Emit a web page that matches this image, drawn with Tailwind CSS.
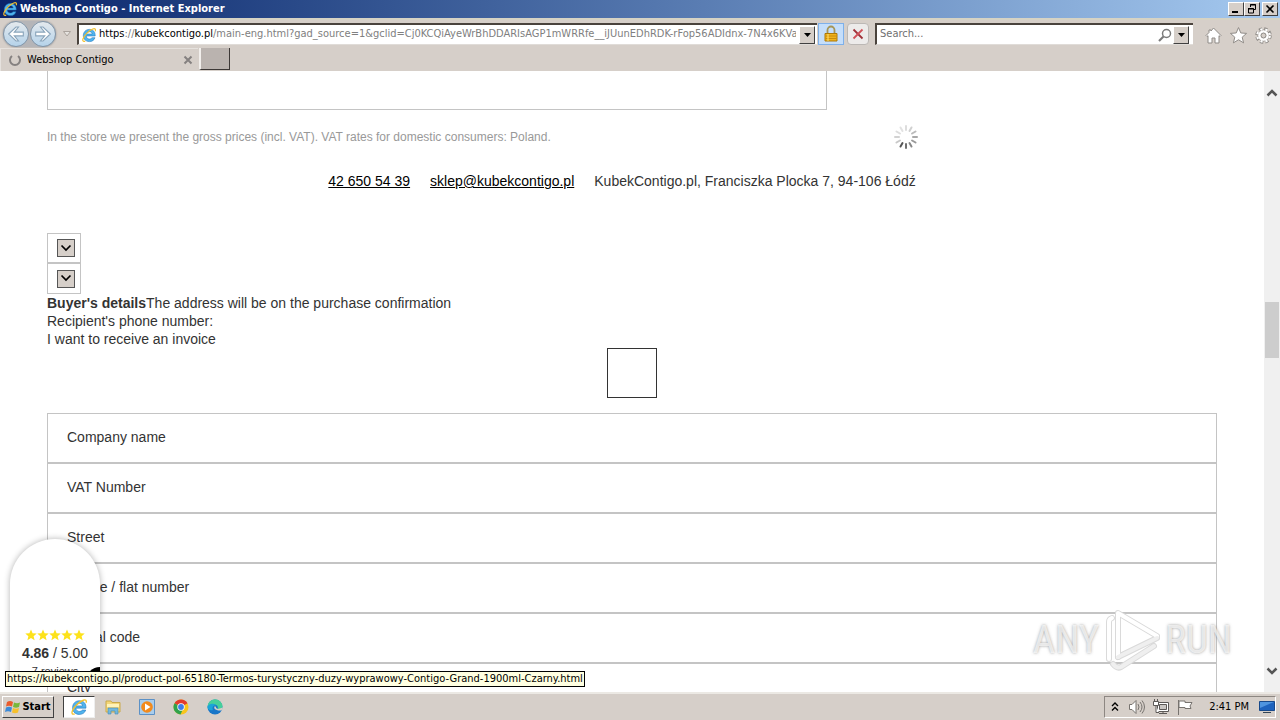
<!DOCTYPE html>
<html lang="en">
<head>
<meta charset="utf-8">
<title>Webshop Contigo</title>
<script src="https://cdn.jsdelivr.net/npm/@tailwindcss/browser@4"></script>
</head>
<body class="h-screen overflow-hidden flex flex-col bg-[#d6cfc9] text-[11px] text-black font-['DejaVu_Sans_Condensed','DejaVu_Sans',sans-serif]">
<svg class="hidden">
  <symbol id="ie" viewBox="0 0 16 16">
    <path d="M14.200 9H5.200c.2 1.900 1.500 3 3.200 3 1.200 0 2.100-.5 2.600-1.300h3c-.8 2.500-2.900 3.900-5.600 3.900-3.600 0-6.100-2.400-6.100-6S4.800 2.400 8.400 2.400c3.800 0 6 2.500 5.800 6.600zM5.300 7h5.900C11 5.500 10 4.700 8.300 4.700S5.600 5.500 5.300 7z" fill="#4fb4ee" stroke="#1b6fb5" stroke-width=".5"/>
    <path d="M14.300 4.200c.7-2.100-.3-3-2.500-2.200C8 3.400 3.300 8.200 2 11.800c-.7 2 0 3 2.200 2.300" fill="none" stroke="#f2c12e" stroke-width="1.200"/>
  </symbol>
  <symbol id="star" viewBox="0 0 12 12"><path d="M6 .4l1.600 3.800 4.100.3-3.100 2.700 1 4L6 9 2.400 11.200l1-4L.3 4.500l4.100-.3z"/></symbol>
</svg>

<header class="shrink-0">
  <div class="h-[18px] flex items-center bg-linear-to-r from-[#0a246a] to-[#a6caf0] pl-0.5 pr-0.5 text-white font-bold">
    <svg class="size-4 mr-0.5"><use href="#ie"/></svg>
    <h1 class="flex-1 whitespace-nowrap">Webshop Contigo - Internet Explorer</h1>
    <button aria-label="Minimize" class="w-4 h-[14px] bg-[#d6cfc9] border border-t-white border-l-white border-r-[#404040] border-b-[#404040]"><svg viewBox="0 0 14 12"><path d="M3 8h6v2H3z"/></svg></button>
    <button aria-label="Restore" class="w-4 h-[14px] bg-[#d6cfc9] border border-t-white border-l-white border-r-[#404040] border-b-[#404040]"><svg viewBox="0 0 14 12" fill="none" stroke="#000"><path d="M5.500 4V1.500h5v5H9M5 2h6M3 5.500h5.500v4.500H3.500V5M3 6h6"/></svg></button>
    <button aria-label="Close" class="w-4 h-[14px] ml-0.5 bg-[#d6cfc9] border border-t-white border-l-white border-r-[#404040] border-b-[#404040]"><svg viewBox="0 0 14 12" stroke="#000" stroke-width="1.600"><path d="M3.500 2.500l7 7M10.500 2.500l-7 7"/></svg></button>
  </div>
  <div class="h-[30px] flex items-center border-t-2 border-[#d6d3c4] pl-[3px] pr-2">
    <div class="flex items-center rounded-full bg-[#b5b5b8] shadow-[0_0_2px_#888]">
      <button aria-label="Back" class="size-[26px] rounded-full border border-[#8195a8] bg-linear-to-b from-[#e4e9ed] to-[#b5d3ea] p-[3px]"><svg viewBox="0 0 16 16" fill="#fff" stroke="#8aa5bb" stroke-width="1"><path d="M1.500 8L8 1.800h2.200L6.500 6.300h8v3.400h-8l3.700 4.500H8z"/></svg></button>
      <button aria-label="Forward" class="size-[26px] ml-px rounded-full border border-[#8195a8] bg-linear-to-b from-[#e4e9ed] to-[#b5d3ea] p-[3px]"><svg viewBox="0 0 16 16" fill="#fff" stroke="#8aa5bb" stroke-width="1"><path d="M14.500 8L8 1.800H5.800l3.700 4.500h-8v3.400h8l-3.700 4.500H8z"/></svg></button>
    </div>
    <button aria-label="Recent pages" class="w-[21px] flex justify-center"><svg class="w-2 h-1.5" viewBox="0 0 8 6"><path d="M.5.500h7L4 5z" fill="#e6e3df" stroke="#aaa39d"/></svg></button>
    <div class="flex-1 min-w-0 h-[22px] flex items-center bg-white border-t-2 border-l-2 border-t-[#4a433d] border-l-[#4a433d] border-b border-b-[#e0dcd8]">
      <svg class="size-4 mx-0.5 shrink-0"><use href="#ie"/></svg>
      <div class="flex-1 overflow-hidden whitespace-nowrap text-[#808080]"><span class="text-black">https</span>://<span class="text-black">kubekcontigo.pl</span>/main-eng.html?gad_source=1&amp;gclid=Cj0KCQiAyeWrBhDDARIsAGP1mWRRfe__iJUunEDhRDK-rFop56ADIdnx-7N4x6KVavc</div>
      <button aria-label="Show address history" class="w-4 h-[18px] ml-[3px] mr-0.5 bg-[#d6cfc9] border border-t-white border-l-white border-r-[#404040] border-b-[#404040] flex justify-center items-center"><svg class="w-[7px] h-1" viewBox="0 0 7 4"><path d="M0 0h7L3.500 4z"/></svg></button>
    </div>
    <button aria-label="Security report" class="w-[26px] h-[22px] ml-px flex justify-center items-center bg-[#c5defa] border border-[#7eb0ea]"><svg class="w-4 h-[18px]" viewBox="0 0 16 18"><path d="M4.500 9V5a3.500 3.500 0 017 0v4" fill="none" stroke="#a59558" stroke-width="1.800"/><path d="M2 8.500h12v7.500H2z" fill="#f1b31b" stroke="#ad7908"/><path d="M2.500 11h11M2.500 13.500h11" stroke="#c88c0c"/><path d="M5 9v7" stroke="#ffe27a"/></svg></button>
    <button aria-label="Stop" class="size-[22px] ml-[3px] flex justify-center items-center bg-[#edebea] border border-[#bcb8b5] rounded-sm"><svg class="size-3" viewBox="0 0 12 12" stroke-width="1.800"><path d="M1.500 1.500l9 9" stroke="#9f3038"/><path d="M10.500 1.500l-9 9" stroke="#cf5058"/></svg></button>
    <div class="w-[318px] h-[22px] ml-1.5 mr-3 flex items-center bg-white border-t-2 border-l-2 border-t-[#4a433d] border-l-[#4a433d] border-b border-b-[#e0dcd8]">
      <input aria-label="Search" placeholder="Search..." class="flex-1 min-w-0 pl-[3px] outline-none placeholder:text-[#707070]">
      <svg class="size-3.5 mr-px" viewBox="0 0 14 14" fill="none" stroke="#7b7b7b"><circle cx="8.500" cy="5.500" r="4" stroke-width="1.500"/><path d="M5.500 8.500L1 13" stroke-width="2.200"/></svg>
      <button aria-label="Search providers" class="w-4 h-[18px] mr-1 bg-[#d6cfc9] border border-t-white border-l-white border-r-[#404040] border-b-[#404040] flex justify-center items-center"><svg class="w-[7px] h-1" viewBox="0 0 7 4"><path d="M0 0h7L3.500 4z"/></svg></button>
    </div>
    <div class="flex gap-2 pt-0.5">
      <button aria-label="Home"><svg class="size-[17px]" viewBox="0 0 17 17" fill="#fff" stroke="#8f8b87"><path d="M8.500 1L16 8.500l-1 1-1-.8V16H10v-5H7v5H3V8.700l-1 .8-1-1L4 5.500V3h2v1z"/></svg></button>
      <button aria-label="Favorites"><svg class="size-[17px]" viewBox="0 0 12 12" fill="#fff" stroke="#8f8b87" stroke-width=".7"><use href="#star"/></svg></button>
      <button aria-label="Tools"><svg class="size-[17px]" viewBox="0 0 17 17"><circle cx="8.500" cy="8.500" r="6.500" fill="none" stroke="#8f8b87" stroke-width="3.500" stroke-dasharray="3.100 2"/><circle cx="8.500" cy="8.500" r="5.500" fill="none" stroke="#8f8b87"/><circle cx="8.500" cy="8.500" r="6.300" fill="none" stroke="#fff" stroke-width="2.200" stroke-dasharray="2.100 2.950" stroke-dashoffset="-.5"/><circle cx="8.500" cy="8.500" r="4" fill="none" stroke="#fff" stroke-width="2.600"/><circle cx="8.500" cy="8.500" r="2.500" fill="#d6cfc9" stroke="#8f8b87"/></svg></button>
    </div>
  </div>
  <div class="h-[23px] flex items-start">
    <div class="w-[198px] h-[23px] flex items-center border-t border-l border-[#e6e2de] pl-2 pr-1">
      <svg class="size-3 mr-1.5" viewBox="0 0 12 12" fill="none" stroke="#858180" stroke-width="2"><path d="M3 2a5 5 0 106 0"/></svg>
      <span class="flex-1">Webshop Contigo</span>
      <button aria-label="Close tab" class="size-3"><svg viewBox="0 0 12 12" stroke="#858180" stroke-width="2"><path d="M2.500 2.500l7 7M9.500 2.500l-7 7"/></svg></button>
    </div>
    <button aria-label="New tab" class="w-[31px] h-[22px] ml-px bg-[#bab3af] border border-t-0 border-l-2 border-l-[#f2efec] border-r-[#3c3836] border-b-[#3c3836]"></button>
  </div>
</header>

<div class="relative flex-1 min-h-0 flex bg-white">
  <main class="flex-1 min-w-0 h-full overflow-hidden px-[47px] text-sm text-[#333] font-['Liberation_Sans',Arial,sans-serif]">
    <div class="w-2/3 h-[39px] border border-t-0 border-[#c4c4c4]"></div>
    <div class="mt-[15px] h-6 flex items-center text-xs text-[#999]">
      <p class="w-[847px]">In the store we present the gross prices (incl. VAT). VAT rates for domestic consumers: Poland.</p>
      <svg class="size-6" viewBox="-12 -12 24 24" stroke-width="2" stroke-linecap="round">
        <path d="M0-7v-4" stroke="#ddd"/><path d="M0-7v-4" stroke="#d0d0d0" transform="rotate(30)"/><path d="M0-7v-4" stroke="#bbb" transform="rotate(60)"/><path d="M0-7v-4" stroke="#a8a8a8" transform="rotate(90)"/><path d="M0-7v-4" stroke="#999" transform="rotate(120)"/><path d="M0-7v-4" stroke="#888" transform="rotate(150)"/><path d="M0-7v-4" stroke="#707070" transform="rotate(180)"/><path d="M0-7v-4" stroke="#555" transform="rotate(210)"/><path d="M0-7v-4" stroke="#c8c8c8" transform="rotate(240)"/><path d="M0-7v-4" stroke="#d2d2d2" transform="rotate(270)"/><path d="M0-7v-4" stroke="#ddd" transform="rotate(300)"/><path d="M0-7v-4" stroke="#e2e2e2" transform="rotate(330)"/>
      </svg>
    </div>
    <address class="mt-[22px] flex justify-center gap-5 pr-5 not-italic">
      <a href="tel:426505439" class="text-black underline">42 650 54 39</a>
      <a href="mailto:sklep@kubekcontigo.pl" class="text-black underline">sklep@kubekcontigo.pl</a>
      <span>KubekContigo.pl, Franciszka Plocka 7, 94-106 Łódź</span>
    </address>
    <form>
      <div class="mt-[42px] flex flex-col items-start">
        <div class="relative w-[34px] h-[30px] border border-[#c4c4c4] flex items-center pl-[9px]">
          <select aria-label="Country" class="appearance-none size-[18px] bg-[#d6cfc9] border border-[#555]"></select>
          <svg class="absolute left-3 top-2.5 w-3 h-2 pointer-events-none" viewBox="0 0 12 8" fill="none" stroke="#000" stroke-width="1.700"><path d="M1.500 1.500L6 6l4.500-4.500"/></svg>
        </div>
        <div class="relative w-[34px] h-[31px] border border-[#c4c4c4] flex items-center pl-[9px]">
          <select aria-label="Region" class="appearance-none size-[18px] bg-[#d6cfc9] border border-[#555]"></select>
          <svg class="absolute left-3 top-2.5 w-3 h-2 pointer-events-none" viewBox="0 0 12 8" fill="none" stroke="#000" stroke-width="1.700"><path d="M1.500 1.500L6 6l4.500-4.500"/></svg>
        </div>
      </div>
      <div class="leading-[18px]">
        <p><b>Buyer's details</b>The address will be on the purchase confirmation</p>
        <p>Recipient's phone number:</p>
        <label for="invoice" class="block">I want to receive an invoice</label>
      </div>
      <input id="invoice" type="checkbox" class="appearance-none block size-[50px] mx-auto border border-[#333] bg-white">
      <div class="mt-[15px] flex flex-col">
        <input aria-label="Company name" placeholder="Company name" class="h-[50px] px-[19px] pb-0.5 border border-[#c4c4c4] placeholder:text-[#333]">
        <input aria-label="VAT Number" placeholder="VAT Number" class="h-[50px] px-[19px] pb-0.5 border border-[#c4c4c4] placeholder:text-[#333]">
        <input aria-label="Street" placeholder="Street" class="h-[50px] px-[19px] pb-0.5 border border-[#c4c4c4] placeholder:text-[#333]">
        <input aria-label="House / flat number" placeholder="House / flat number" class="h-[50px] px-[19px] pb-0.5 border border-[#c4c4c4] placeholder:text-[#333]">
        <input aria-label="Postal code" placeholder="Postal code" class="h-[50px] px-[19px] pb-0.5 border border-[#c4c4c4] placeholder:text-[#333]">
        <input aria-label="City" placeholder="City" class="h-[50px] px-[19px] pb-0.5 border border-[#c4c4c4] placeholder:text-[#333]">
      </div>
    </form>
  </main>

  <div class="w-4 h-full bg-[#f0f0f0] flex flex-col items-center justify-between pt-[17px] pb-4">
    <svg class="w-3 h-2.5 shrink-0" viewBox="0 0 12 10" fill="none" stroke="#555" stroke-width="2.500"><path d="M1.500 7.500L6 3l4.500 4.500"/></svg>
    <div class="flex-1 w-3.5 pt-[204px]"><div class="h-14 bg-[#cdcdcd]"></div></div>
    <svg class="w-3 h-2.5 shrink-0" viewBox="0 0 12 10" fill="none" stroke="#555" stroke-width="2.500"><path d="M1.500 2.500L6 7l4.500-4.500"/></svg>
  </div>

  <aside class="absolute left-2.5 bottom-3 w-[90px] h-[141px] rounded-t-full overflow-hidden bg-white shadow-[0_0_6px_rgba(0,0,0,0.3)] pt-[90px] text-center text-sm text-[#333] font-['Liberation_Sans',Arial,sans-serif]">
    <div class="flex justify-center h-3 fill-[#fde21a]"><svg class="size-3"><use href="#star"/></svg><svg class="size-3"><use href="#star"/></svg><svg class="size-3"><use href="#star"/></svg><svg class="size-3"><use href="#star"/></svg><svg class="size-3"><use href="#star"/></svg></div>
    <p class="mt-0.5 leading-5"><b>4.86</b> / 5.00</p>
    <p class="text-[11px] leading-4">7 reviews</p>
    <div class="absolute left-[76px] top-32 size-7 rounded-full bg-black"></div>
  </aside>

  <div aria-label="ANY RUN" class="absolute right-12 bottom-5 h-16 flex items-center gap-[5px] text-[39px] leading-none text-white/70 [text-shadow:0_0_3px_rgba(120,120,120,0.7)] font-['Liberation_Sans_Narrow','Roboto_Condensed',Roboto,sans-serif]">
    <span>ANY</span>
    <svg class="w-14 h-16" viewBox="0 0 56 64" fill="none" stroke-linejoin="round" stroke-linecap="round"><g stroke="#dadada" stroke-width="6"><path d="M5 51V14q0-3 3-4"/><path d="M14 49V5l39 23"/><path d="M14 49L53 30M9 56q4 5 8 3l33-21"/></g><g stroke="#fff" stroke-width="4"><path d="M5 51V14q0-3 3-4"/><path d="M14 49V5l39 23"/></g><g stroke="#efefef" stroke-width="4"><path d="M14 49L53 30M9 56q4 5 8 3l33-21"/></g></svg>
    <span>RUN</span>
  </div>

  <div class="absolute left-[5px] bottom-[5px] h-4 flex items-center px-px bg-[#ffffe1] border border-black whitespace-nowrap">https://kubekcontigo.pl/product-pol-65180-Termos-turystyczny-duzy-wyprawowy-Contigo-Grand-1900ml-Czarny.html</div>
</div>

<footer class="h-7 shrink-0 border-t-2 border-[#ece9e4] flex items-center pl-0.5 pr-1">
  <button class="w-[52px] h-[22px] mr-[9px] flex items-center justify-center gap-px border border-t-white border-l-white border-r-[#404040] border-b-[#404040] font-bold"><svg class="size-4 shrink-0" viewBox="0 0 16 16"><path d="M2 3q3-2 6 0L7 7.500Q4 6 1 7.500z" fill="#ea5b2c"/><path d="M9 3.500q3 1.500 6 0L14 8q-3 1.500-6 0z" fill="#78b83b"/><path d="M1 8.500q3-1.500 6 0L6 13q-3-1.500-6 0z" fill="#3c8ad8"/><path d="M8 9q3 1.500 6 0l-1 4.500q-3 1.500-6 0z" fill="#f6c02c"/></svg>Start</button>
  <nav class="flex-1 flex items-center gap-[18px]">
    <button aria-label="Internet Explorer" class="w-8 h-[22px] -mr-2 flex justify-center items-center bg-white border border-t-[#404040] border-l-[#404040] border-[#eee]"><svg class="size-[18px]"><use href="#ie"/></svg></button>
    <button aria-label="File Explorer"><svg class="size-4" viewBox="0 0 16 16"><path d="M1 2h5l1 1.500h8V13H1z" fill="#f3d679" stroke="#c9a94a"/><path d="M2 5h12v3H2z" fill="#fff3b8"/><path d="M3 15V9h10v6h-3v-3H6v3z" fill="#72b8dc" stroke="#438ab5" stroke-width=".6"/></svg></button>
    <button aria-label="Media Player"><svg class="size-4" viewBox="0 0 16 16"><path d="M.5.500h15v15H.500z" fill="#a9cdec" stroke="#5c91c6"/><circle cx="8" cy="8" r="5.800" fill="#f28a1c"/><path d="M6 4.500L11.500 8 6 11.500z" fill="#fff"/></svg></button>
    <button aria-label="Chrome"><svg class="size-4" viewBox="0 0 16 16"><circle cx="8" cy="8" r="7.500" fill="#f8c51c"/><path d="M8 8L1.500 4.200A7.500 7.500 0 0114.500 4.200z" fill="#e33b2e"/><path d="M8 8L1.500 4.200A7.500 7.500 0 007.500 15.500L10 10z" fill="#30a24c"/><circle cx="8" cy="8" r="3.700" fill="#fff"/><circle cx="8" cy="8" r="2.900" fill="#3f7de8"/></svg></button>
    <button aria-label="Edge"><svg class="size-4" viewBox="0 0 16 16"><circle cx="8" cy="8" r="7.500" fill="#1976c8"/><path d="M.5 8a7.500 7.500 0 0115-.5c0 2-2 3-5 2.500C12 7 9 5 6 5.500S1 7 .5 8z" fill="#46cf9b"/><path d="M.5 8C1 4.500 7 3.500 9 6.500c-3-.5-4 2-3 4.500C2 12 .5 10 .5 8z" fill="#1ba4d8"/><path d="M8 7c-2 2 0 5 6.500 4.500L16 8.500l-5 1.500C9 9.500 9.500 8.500 8 7z" fill="#d6cfc9"/></svg></button>
  </nav>
  <div class="h-[22px] flex items-center border-t border-l border-[#8d8782] border-b border-b-white border-r border-r-white pl-1.5">
    <svg class="w-2 h-2.5 mr-2.5" viewBox="0 0 8 10" fill="none" stroke="#000" stroke-width="1.400"><path d="M1 4l3-3 3 3M1 8.500l3-3 3 3"/></svg>
    <svg class="size-4 mr-2" viewBox="0 0 16 16" fill="#fff" stroke="#77736f"><path d="M.5 5.500H3L7 1.500v13L3 10.500H.500z"/><path d="M9 5q2 3 0 6M11 3q4 5 0 10M13 1.500q5 6.500 0 13" fill="none"/></svg>
    <svg class="size-4 mr-2" viewBox="0 0 16 16" fill="#fff" stroke="#5c5856"><path d="M4.500 3.500h11v9h-11zM6 14.500h8M10 12.500v2"/><path d="M6.500 5.500h7v5h-7z" fill="#c9c5c2"/><path d="M.5 2.500h5v4h-5zM1.500 0v2.500M4.500 0v2.500M3 6.500v7h3"/></svg>
    <svg class="size-4 mr-4" viewBox="0 0 16 16" fill="#fff" stroke="#77736f"><path d="M1.500 1v15M2 2h6v1.500h7L13 7l1 2.500H8V8.500H2z"/></svg>
    <time class="mr-2.5">2:41 PM</time>
    <svg class="w-4 h-3.5" viewBox="0 0 16 14"><path d="M.5 1.500h15v9H.500z" fill="#1d62bd" stroke="#17498b"/><path d="M1 2h14L1 8z" fill="#4e94df"/><path d="M4 12.500h8" stroke="#345"/></svg>
  </div>
</footer>
</body>
</html>
